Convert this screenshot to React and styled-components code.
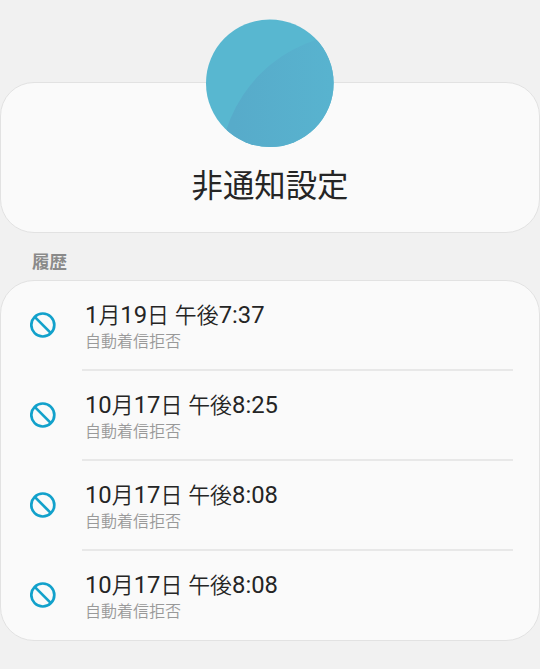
import styled, { createGlobalStyle } from 'styled-components';

const GlobalStyle = createGlobalStyle`
  * {
    box-sizing: border-box;
  }

  body {
    margin: 0;
    background: #f1f1f1;
    font-family: Roboto, 'Noto Sans CJK JP', sans-serif;
  }
`;

const Page = styled.main`
  width: 540px;
  height: 669px;
  padding-top: 82px;
  overflow: hidden;
  background: #f1f1f1;
`;

const Card = styled.section`
  width: 100%;
  border: 1px solid #e2e2e2;
  border-radius: 34px;
  background: #fafafa;
`;

const ProfileCard = styled(Card)`
  height: 151px;
  display: flex;
  flex-direction: column;
  align-items: center;
`;

const Avatar = styled.svg`
  width: 128px;
  height: 128px;
  margin-top: -64px;
  flex-shrink: 0;
`;

const Name = styled.h1`
  margin: 17px 0 0;
  font-size: 31.4px;
  font-weight: 400;
  line-height: 46px;
  color: #252525;
`;

const SectionTitle = styled.h2`
  height: 47px;
  margin: 0;
  padding: 16px 0 0 32px;
  font-size: 17.5px;
  font-weight: 700;
  line-height: 26px;
  color: #8a8a8a;
`;

const HistoryCard = styled(Card)`
  height: 361px;
`;

const Row = styled.div`
  height: 90px;
  padding: 0 26px 0 29px;
  display: flex;
`;

const BlockIcon = styled.svg`
  width: 26px;
  height: 26px;
  margin: 31px 26px 0 0;
  flex-shrink: 0;
`;

const RowBody = styled.div`
  flex: 1;
  padding: 18px 0 0 3px;
  border-bottom: ${({ $last }) => ($last ? 'none' : '2px solid #e8e8e8')};
`;

const Time = styled.div`
  height: 32px;
  font-size: 23.8px;
  line-height: 32px;
  white-space: pre;
  color: #252525;
`;

const Kanji = styled.span`
  font-size: 21.9px;
  font-weight: 350;
`;

const Reason = styled.div`
  font-size: 16px;
  font-weight: 350;
  line-height: 22px;
  color: #999999;
`;

const history = [
  '1月19日 午後7:37',
  '10月17日 午後8:25',
  '10月17日 午後8:08',
  '10月17日 午後8:08',
];

// kanji are set a little smaller than the digits around them
const renderTime = (time) =>
  time
    .split(/([月日午後]+)/)
    .map((part, i) => (i % 2 ? <Kanji key={i}>{part}</Kanji> : part));

const App = () => (
  <>
    <GlobalStyle />
    <Page>
      <ProfileCard>
        <Avatar viewBox="0 0 128 128">
          <defs>
            <clipPath id="avatar">
              <circle cx="63.8" cy="64.2" r="63.8" />
            </clipPath>
            <linearGradient id="shade" x1="0" x2="1" y1="0" y2="0">
              <stop offset="0.05" stopColor="#57abca" />
              <stop offset="0.4" stopColor="#58b3cf" />
            </linearGradient>
          </defs>
          <g clipPath="url(#avatar)">
            <rect width="128" height="128" fill="#58b7d0" />
            <circle cx="152.7" cy="153.1" r="139" fill="url(#shade)" />
          </g>
        </Avatar>
        <Name>非通知設定</Name>
      </ProfileCard>
      <SectionTitle>履歴</SectionTitle>
      <HistoryCard>
        {history.map((time, i) => (
          <Row key={i}>
            <BlockIcon viewBox="0 0 26 26" fill="none" stroke="#12a1cb" strokeWidth="2.7">
              <circle cx="12.8" cy="13" r="11.5" />
              <path d="M4.7 4.9 20.9 21.1" />
            </BlockIcon>
            <RowBody $last={i === history.length - 1}>
              <Time>{renderTime(time)}</Time>
              <Reason>自動着信拒否</Reason>
            </RowBody>
          </Row>
        ))}
      </HistoryCard>
    </Page>
  </>
);

export default App;
